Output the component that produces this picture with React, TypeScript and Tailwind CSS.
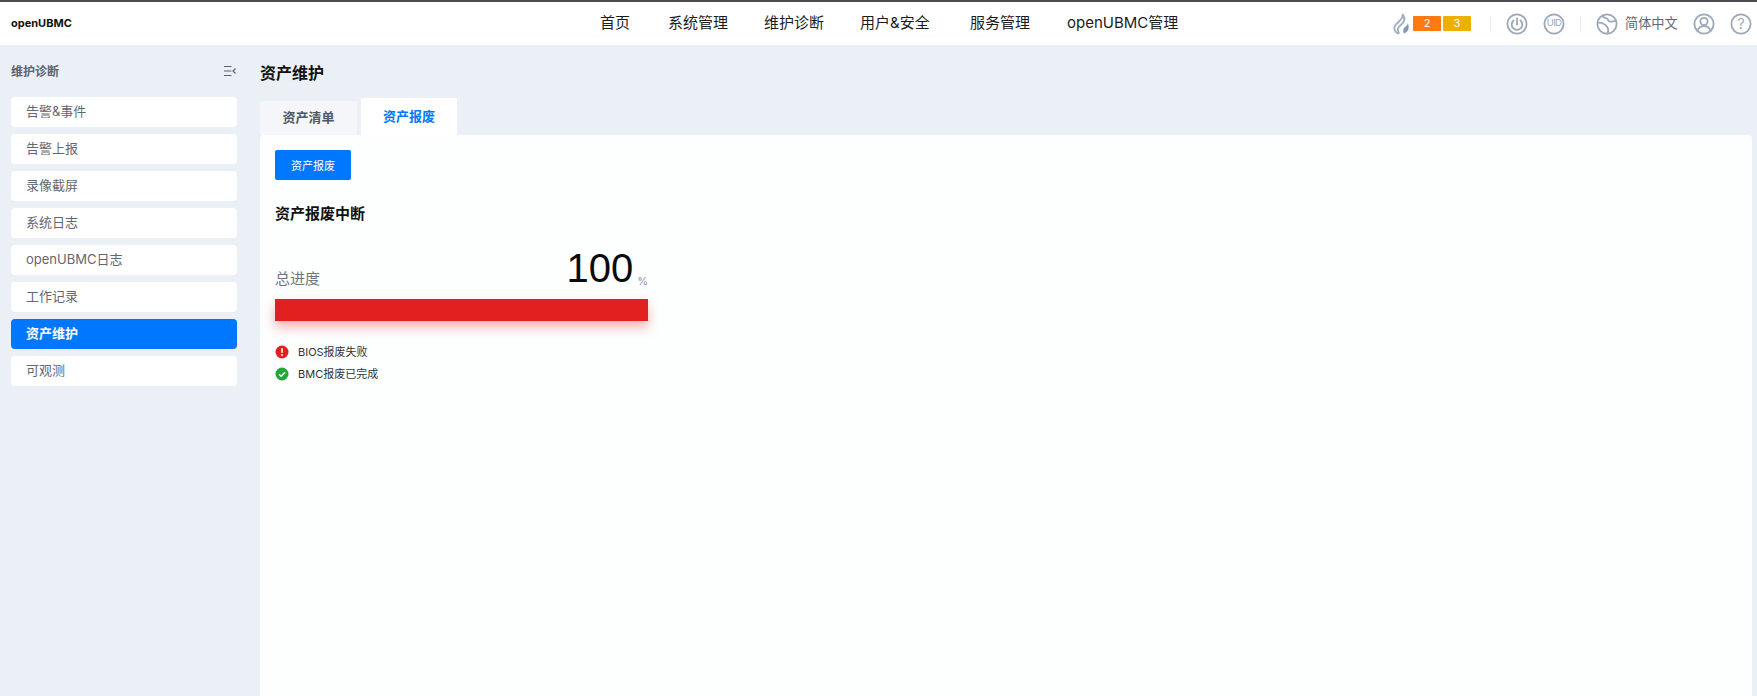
const CJK = "font-['Inter','Noto_Sans_CJK_SC',sans-serif]";

function Flame() {
  return (
    <svg width="20" height="22" viewBox="0 0 20 22" fill="none">
      <path d="M11.500 1.500c.8 2.500-1 4.500-3.500 7C5.800 10.700 3 12.500 3.300 15.500c.2 2 1.700 4 3.700 5 1.200-.2 1-1 .3-2-1-1.600-.7-3.200.7-4.800 1.800-2 4.500-3.400 5.200-6.200.6-2.500-.2-4.700-1.700-6z" stroke="#9fb0c4" strokeWidth="1.800" strokeLinejoin="round" fill="#fff" />
      <path d="M16.800 10c.2 1.800-1.700 3-3.200 4.600-1.500 1.700-1.800 3.600-.7 5.800 2.400-.6 4.400-2.700 4.700-5.400.1-1.900-.1-3.700-.8-5z" fill="#8496ab" />
    </svg>
  );
}

function Ring({ children }: { children?: React.ReactNode }) {
  return (
    <svg width="22" height="22" viewBox="0 0 22 22" fill="none" stroke="#9aa8b8" strokeWidth="1.800" strokeLinecap="round">
      <circle cx="11" cy="11" r="9.600" />
      {children}
    </svg>
  );
}

const menu = ["告警&事件", "告警上报", "录像截屏", "系统日志", "openUBMC日志", "工作记录", "资产维护", "可观测"];
const nav = [
  { t: "首页", w: "w-[32px]" },
  { t: "系统管理", w: "w-[60px]" },
  { t: "维护诊断", w: "w-[60px]" },
  { t: "用户&安全", w: "w-[74px]" },
  { t: "服务管理", w: "w-[61px]" },
  { t: "openUBMC管理", w: "w-[112px]" },
];

export default function App() {
  return (
    <div className={`h-[696px] w-[1757px] overflow-hidden bg-[#ebeff6] ${CJK}`}>
      <header className="flex h-[45px] items-center border-t-2 border-[#4a4c4f] bg-white">
        <div className="w-[600px] pl-[11px] text-[11px] font-bold text-[#111]">openUBMC</div>
        <nav className="flex gap-[36px] text-[15px] text-[#1c1c1c]">
          {nav.map((n) => (
            <span key={n.t} className={`${n.w} whitespace-nowrap`}>{n.t}</span>
          ))}
        </nav>
        <div className="ml-[212px] flex items-center">
          <Flame />
          <span className="ml-[2px] flex h-[15px] w-[28px] items-center justify-center rounded-[1px] bg-[#fd7a13] text-[11px] text-white">2</span>
          <span className="ml-[2px] flex h-[15px] w-[28px] items-center justify-center rounded-[1px] bg-[#eeb000] text-[11px] text-white">3</span>
          <span className="ml-[19px] h-[15px] w-px bg-[#e8ebf1]" />
          <span className="ml-[15px] flex">
            <Ring>
              <path d="M11 5.300v6.200" />
              <path d="M7.500 7.500a5.300 5.300 0 1 0 7 0" />
            </Ring>
          </span>
          <span className="relative ml-[15px] flex">
            <Ring />
            <span className="absolute inset-0 flex items-center justify-center text-[9.500px] tracking-[-0.6px] text-[#9aa8b8]">UID</span>
          </span>
          <span className="ml-[15px] h-[15px] w-px bg-[#e8ebf1]" />
          <span className="ml-[15px] flex">
            <Ring>
              <path d="M1.800 10c2.700-1 4.500.2 6.500 1.300 1.700.9 2.200 2 3.200 3.200.8 1 .8 3.500.2 6" />
              <path d="M6 3c1.300 1.800 3.500 1.600 5 2.600 1.300.9 1 2.300 2.700 2.900 2 .6 3.800-.8 6.300-.3" />
            </Ring>
          </span>
          <span className="ml-[7px] w-[53px] whitespace-nowrap text-[13.200px] text-[#5f6873]">简体中文</span>
          <span className="ml-[15px] flex">
            <Ring>
              <circle cx="11" cy="8.500" r="3.600" />
              <path d="M4.500 18c1-3.200 3.500-4.800 6.500-4.800s5.500 1.600 6.500 4.800" />
            </Ring>
          </span>
          <span className="relative ml-[15px] flex">
            <Ring />
            <span className="absolute inset-0 flex items-center justify-center text-[14px] text-[#9aa8b8]">?</span>
          </span>
        </div>
      </header>

      <div className="flex">
        <aside className="ml-[11px] w-[226px] shrink-0">
          <div className="flex h-[52px] items-center justify-between">
            <span className="pt-[1px] text-[12px] font-bold text-[#5b6470]">维护诊断</span>
            <svg width="13" height="12" viewBox="0 0 13 12" fill="none" stroke="#5b6470" strokeWidth="1.200" className="mr-[1px]">
              <path d="M1 1.500h7.500M1 6h7.500M1 10.500h7.500" />
              <path d="M12.500 3.500 10 6l2.500 2.500" />
            </svg>
          </div>
          <ul className="flex flex-col gap-[7px]">
            {menu.map((m) => {
              const active = m === "资产维护";
              return (
                <li
                  key={m}
                  className={
                    active
                      ? "flex h-[30px] items-center rounded-[4px] bg-[#0077ff] pl-[15px] text-[13px] font-bold text-white"
                      : "flex h-[30px] items-center rounded-[4px] bg-white pl-[15px] text-[13px] text-[#5f6873]"
                  }
                >
                  {m}
                </li>
              );
            })}
          </ul>
        </aside>

        <main className="ml-[23px] flex-1 pr-[5px]">
          <h1 className="flex h-[53px] items-center pt-[2px] text-[16px] font-bold text-[#111]">资产维护</h1>
          <div className="flex items-end gap-[4px]">
            <div className="flex h-[34px] w-[97px] items-center justify-center rounded-t-[2px] bg-[#f4f6fa] pb-[1px] text-[13px] font-semibold text-[#4f5864]">资产清单</div>
            <div className="flex h-[37px] w-[96px] items-center justify-center rounded-t-[2px] bg-white text-[13px] font-semibold text-[#0077ff]">资产报废</div>
          </div>
          <section className="h-[561px] rounded-t-[4px] bg-[#fdfefe] pl-[15px] pt-[15px]">
            <button className="flex h-[30px] w-[76px] items-center justify-center rounded-[2px] bg-[#0077ff] pt-[2px] text-[11px] text-white">资产报废</button>
            <h2 className="mt-[24px] h-[20px] text-[15px] font-bold leading-[20px] text-[#111]">资产报废中断</h2>
            <div className="mt-[22px] w-[373px]">
              <div className="flex h-[44px] items-end justify-between">
                <span className="text-[15px] leading-[22px] text-[#6d7682]">总进度</span>
                <span className="flex items-end">
                  <span className="font-['Liberation_Sans',sans-serif] text-[40px] leading-[44px] text-[#0a0a0a]">100</span>
                  <span className="ml-[4px] text-[11px] leading-[18px] text-[#8b94a0]">%</span>
                </span>
              </div>
              <div className="mt-[9px] h-[22px] bg-[#e32020] shadow-[0_6px_12px_rgba(227,32,32,0.35)]" />
            </div>
            <ul className="mt-[23px] flex flex-col gap-[6px] text-[11px] text-[#333]">
              <li className="flex h-[16px] items-center">
                <svg width="14" height="14" viewBox="0 0 14 14" className="mr-[9px]">
                  <circle cx="7" cy="7" r="6.500" fill="#e32020" />
                  <rect x="6.200" y="3" width="1.600" height="5" rx="0.800" fill="#fff" />
                  <circle cx="7" cy="10" r="1" fill="#fff" />
                </svg>
                BIOS报废失败
              </li>
              <li className="flex h-[16px] items-center">
                <svg width="14" height="14" viewBox="0 0 14 14" className="mr-[9px]">
                  <circle cx="7" cy="7" r="6.500" fill="#22a83a" />
                  <path d="M4 7.200 6.200 9.300 10 5.200" stroke="#fff" strokeWidth="1.500" fill="none" />
                </svg>
                BMC报废已完成
              </li>
            </ul>
          </section>
        </main>
      </div>
    </div>
  );
}
